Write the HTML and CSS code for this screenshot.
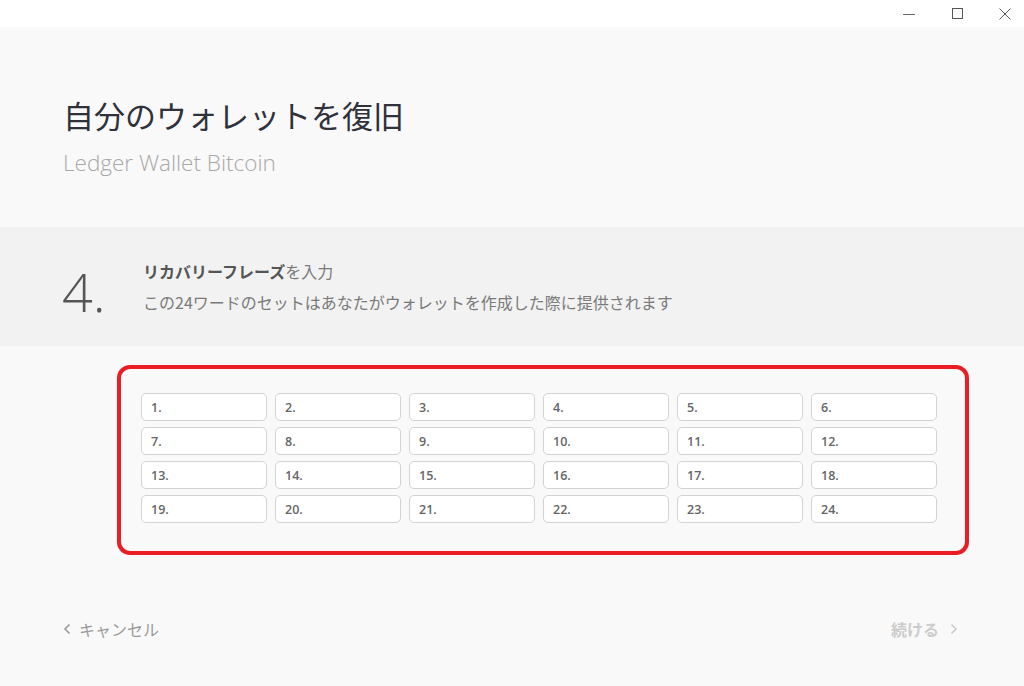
FILE: index.html
```html
<!DOCTYPE html>
<html lang="ja">
<head>
<meta charset="utf-8">
<title>自分のウォレットを復旧</title>
<link rel="stylesheet" href="styles.css">
</head>
<body>
<div class="titlebar">
  <span class="winbtn"><svg width="12" height="12" viewBox="0 0 12 12"><path d="M0 6.5h12" stroke="#666" stroke-width="1"/></svg></span>
  <span class="winbtn"><svg width="12" height="12" viewBox="0 0 12 12"><rect x="1.5" y="0.5" width="10" height="10" fill="none" stroke="#555" stroke-width="1"/></svg></span>
  <span class="winbtn"><svg width="12" height="12" viewBox="0 0 12 12"><path d="M0.5 0.5l11 11M11.5 0.5l-11 11" stroke="#555" stroke-width="1"/></svg></span>
</div>
<header class="header">
  <h1 class="title">自分のウォレットを復旧</h1>
  <div class="subtitle">Ledger Wallet Bitcoin</div>
</header>
<section class="step">
  <div class="step-num">4.</div>
  <div class="step-text">
    <div class="step-title"><b>リカバリーフレーズ</b>を入力</div>
    <div class="step-desc">この24ワードのセットはあなたがウォレットを作成した際に提供されます</div>
  </div>
</section>
<main class="main">
  <div class="box">
    <div class="grid">
      <div class="word">1.</div><div class="word">2.</div><div class="word">3.</div><div class="word">4.</div><div class="word">5.</div><div class="word">6.</div>
      <div class="word">7.</div><div class="word">8.</div><div class="word">9.</div><div class="word">10.</div><div class="word">11.</div><div class="word">12.</div>
      <div class="word">13.</div><div class="word">14.</div><div class="word">15.</div><div class="word">16.</div><div class="word">17.</div><div class="word">18.</div>
      <div class="word">19.</div><div class="word">20.</div><div class="word">21.</div><div class="word">22.</div><div class="word">23.</div><div class="word">24.</div>
    </div>
  </div>
</main>
<footer class="footer">
  <a class="nav cancel"><svg width="8" height="12" viewBox="0 0 8 12"><path d="M6.5 1.5L2 6l4.5 4.5" fill="none" stroke="#999" stroke-width="1.6"/></svg>キャンセル</a>
  <a class="nav next">続ける<svg width="8" height="12" viewBox="0 0 8 12"><path d="M1.5 1.5L6 6l-4.5 4.5" fill="none" stroke="#ccc" stroke-width="1.6"/></svg></a>
</footer>
</body>
</html>
```

FILE: styles.css
```css
* { box-sizing: border-box; }
html, body { margin: 0; padding: 0; }
body {
  width: 1024px;
  height: 686px;
  overflow: hidden;
  background: #f9f9f9;
  font-family: "Open Sans", "Noto Sans CJK JP", sans-serif;
}
.titlebar {
  height: 27px;
  background: #ffffff;
  display: flex;
  justify-content: flex-end;
  align-items: center;
  gap: 36px;
  padding-right: 13px;
}
.winbtn {
  width: 12px;
  height: 12px;
  display: flex;
  align-items: center;
  justify-content: center;
}
.winbtn svg { display: block; }
.header {
  height: 200px;
  padding: 66px 0 0 63px;
}
.title {
  margin: 0;
  font-family: "Noto Sans CJK JP", sans-serif;
  font-weight: 400;
  font-size: 31px;
  line-height: 44px;
  color: #30313a;
}
.subtitle {
  margin-top: 11px;
  font-family: "Open Sans", sans-serif;
  font-weight: 300;
  font-size: 22.5px;
  line-height: 30px;
  color: #a8a8a8;
}
.step {
  height: 119px;
  background: #f2f2f2;
  display: flex;
  align-items: center;
  padding-left: 62px;
}
.step-num {
  width: 81px;
  font-family: "Open Sans", sans-serif;
  font-weight: 300;
  font-size: 54px;
  line-height: 60px;
  color: #555;
  margin-top: 8px;
}
.step-text {
  font-family: "Noto Sans CJK JP", sans-serif;
  font-size: 16px;
  color: #7a7a7a;
}
.step-title { line-height: 20px; }
.step-title b { color: #555; font-weight: 700; }
.step-desc { margin-top: 11px; line-height: 20px; }
.main {
  padding: 19px 0 0 117px;
}
.box {
  width: 852px;
  height: 190px;
  border: 4px solid #ec1c24;
  border-radius: 13px;
  padding: 24px 28px 28px 20px;
}
.grid {
  display: grid;
  grid-template-columns: repeat(6, 126px);
  grid-auto-rows: 28px;
  column-gap: 8px;
  row-gap: 6px;
}
.word {
  background: #fff;
  border: 1.5px solid #d3d3d3;
  border-radius: 5px;
  padding-left: 9px;
  display: flex;
  align-items: center;
  font-family: "Open Sans", sans-serif;
  font-weight: 600;
  font-size: 12.5px;
  color: #666;
  padding-top: 1px;
}
.footer {
  display: flex;
  justify-content: space-between;
  padding: 63px 66px 0 63px;
}
.nav {
  display: flex;
  align-items: center;
  gap: 8px;
  font-family: "Noto Sans CJK JP", sans-serif;
  font-size: 16px;
  line-height: 22px;
}
.cancel { color: #999; }
.next { color: #ccc; font-weight: 700; gap: 11px; }
```
